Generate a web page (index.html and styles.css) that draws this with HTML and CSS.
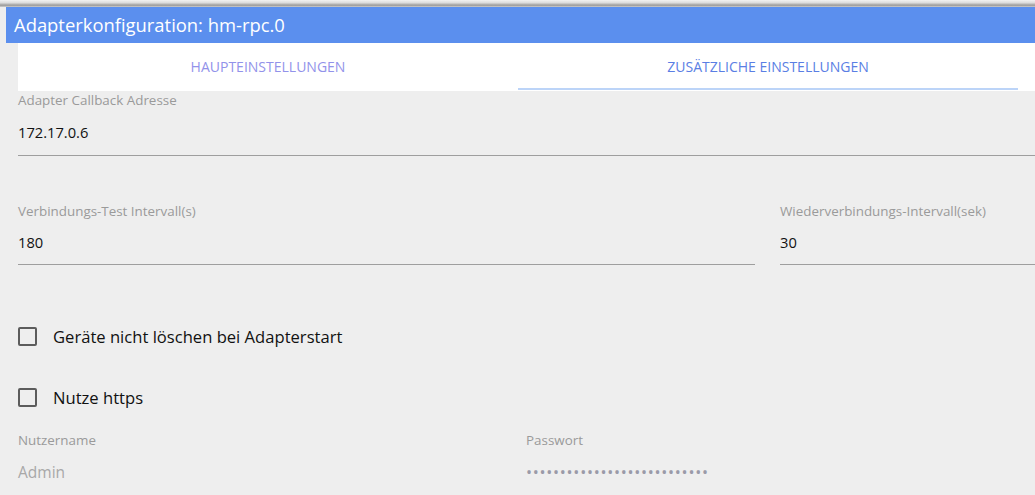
FILE: index.html
```html
<!DOCTYPE html>
<html lang="de">
<head>
    <meta charset="UTF-8">
    <meta name="viewport" content="width=device-width, initial-scale=1.0">
    <title>Adapterkonfiguration: hm-rpc.0</title>
    <link rel="stylesheet" href="styles.css">
</head>
<body>
    <div class="shadow"></div>
    <div class="header">Adapterkonfiguration: hm-rpc.0</div>

    <div class="content">
        <!-- Tabs -->
        <div class="tabs">
            <div class="tab">HAUPTEINSTELLUNGEN</div>
            <div class="tab active">ZUSÄTZLICHE EINSTELLUNGEN</div>
        </div>

        <div class="field field-first">
            <div class="label">Adapter Callback Adresse</div>
            <div class="value">172.17.0.6</div>
        </div>

        <div class="row">
            <div class="field field-test">
                <div class="label">Verbindungs-Test Intervall(s)</div>
                <div class="value">180</div>
            </div>
            <div class="field field-grow">
                <div class="label">Wiederverbindungs-Intervall(sek)</div>
                <div class="value">30</div>
            </div>
        </div>

        <div class="check check-first">
            <span class="box"></span>
            <span>Geräte nicht löschen bei Adapterstart</span>
        </div>
        <div class="check">
            <span class="box"></span>
            <span>Nutze https</span>
        </div>

        <div class="login">
            <div class="field">
                <div class="label">Nutzername</div>
                <div class="value plain muted">Admin</div>
            </div>
            <div class="field">
                <div class="label">Passwort</div>
                <div class="value plain dots">•••••••••••••••••••••••••••</div>
            </div>
        </div>
    </div>
</body>
</html>
```

FILE: styles.css
```css
body {
    margin: 0;
    background-color: #eeeeee;
    font-family: "Open Sans", "Noto Sans", sans-serif;
    overflow: hidden;
}
.shadow {
    height: 7px;
    background: linear-gradient(#f2f2f2, #dcdcdc 40%, #9a9a9a 75%, #cfcfcf);
}
.header {
    margin-left: 6px;
    height: 36px;
    line-height: 35px;
    padding-left: 8px;
    background-color: #5b8fee;
    color: white;
    font-size: 18.4px;
}
.content {
    padding-left: 18px;
}
.tabs {
    display: flex;
    height: 48px;
    background-color: white;
}
.tab {
    width: 500px;
    box-sizing: border-box;
    text-align: center;
    line-height: 48px;
    font-size: 14px;
    color: #9292ea;
}
.tab.active {
    color: #5a7ee4;
    border-bottom: 2px solid #bcd4f8;
    line-height: 47px;
    margin-bottom: 1px;
}
.label {
    font-size: 13.4px;
    line-height: 18px;
    color: #9a9a9a;
}
.value {
    font-size: 14.7px;
    line-height: 46px;
    color: #111;
    border-bottom: 1px solid #9e9e9e;
}
.value.plain {
    border-bottom: none;
}
.muted {
    color: #a8a8a8;
    font-size: 15.5px;
}
.dots {
    color: #9a9aa8;
    font-size: 16px;
    letter-spacing: 0.75px;
}
.row {
    display: flex;
    gap: 25px;
    margin-top: 46px;
}
.field-test {
    width: 737px;
}
.field-grow {
    flex: 1;
}
.row .value {
    line-height: 44px;
}
.check {
    display: flex;
    align-items: center;
    height: 40px;
    margin-top: 21px;
    font-size: 16.6px;
    color: #111;
}
.check-first {
    margin-top: 51px;
}
.box {
    width: 15px;
    height: 15px;
    border: 2px solid #5c5c5c;
    border-radius: 2px;
    margin-right: 16px;
}
.login {
    display: grid;
    grid-template-columns: 508px 1fr;
    margin-top: 14px;
}
```
